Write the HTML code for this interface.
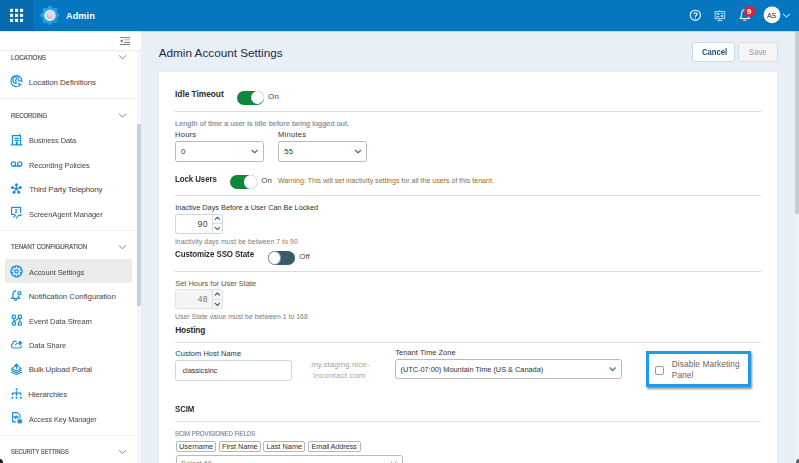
<!DOCTYPE html>
<html><head><meta charset="utf-8">
<style>
*{box-sizing:border-box;margin:0;padding:0}
html,body{width:799px;height:463px;overflow:hidden;background:#e9eff6;font-family:"Liberation Sans",sans-serif}
.a{position:absolute}
.t{position:absolute;line-height:1;white-space:pre;font-family:"Liberation Sans",sans-serif}
.ln{position:absolute;height:1px;background:#dcdcdc}
svg{position:absolute;overflow:visible;z-index:2}
.t{z-index:2}
</style></head><body>
<!-- header -->
<div class="a" style="left:0;top:0;width:799px;height:31px;background:#0577c0;box-shadow:0 1px 1px rgba(0,0,0,0.1);z-index:1"></div>
<div class="a" style="left:0;top:0;width:33px;height:31px;background:#066aae;z-index:1"></div>
<svg style="left:0;top:0" width="33" height="31">
 <g fill="#fff">
 <rect x="10" y="8.8" width="3.1" height="3.1"/><rect x="15" y="8.8" width="3.1" height="3.1"/><rect x="20" y="8.8" width="3.1" height="3.1"/>
 <rect x="10" y="13.8" width="3.1" height="3.1"/><rect x="15" y="13.8" width="3.1" height="3.1"/><rect x="20" y="13.8" width="3.1" height="3.1"/>
 <rect x="10" y="18.8" width="3.1" height="3.1"/><rect x="15" y="18.8" width="3.1" height="3.1"/><rect x="20" y="18.8" width="3.1" height="3.1"/>
 </g>
</svg>
<!-- logo -->
<svg style="left:39px;top:4px" width="22" height="22" viewBox="0 0 22 22">
 <defs><linearGradient id="lg" x1="0" y1="0" x2="1" y2="1"><stop offset="0.45" stop-color="#23a6ec"/><stop offset="1" stop-color="#1690d6"/></linearGradient>
 <radialGradient id="rg" cx="0.6" cy="0.35" r="0.7"><stop offset="0" stop-color="#ecd8f0"/><stop offset="0.55" stop-color="#dcd2dc"/><stop offset="1" stop-color="#b8aea8"/></radialGradient></defs>
 <polygon points="11.00,2.00 13.68,4.93 17.65,4.75 17.47,8.72 20.40,11.40 17.47,14.08 17.65,18.05 13.68,17.87 11.00,20.80 8.32,17.87 4.35,18.05 4.53,14.08 1.60,11.40 4.53,8.72 4.35,4.75 8.32,4.93" fill="url(#lg)" stroke="url(#lg)" stroke-width="1.2" stroke-linejoin="round"/>
 <circle cx="11" cy="11.4" r="5.6" fill="#f6f3ee"/>
 <circle cx="11.3" cy="11.1" r="4.2" fill="url(#rg)"/>
</svg>
<!-- header right icons -->
<svg style="left:686px;top:4px" width="44" height="22" viewBox="0 0 44 22">
 <circle cx="9.4" cy="11.3" r="5.1" fill="none" stroke="#fff" stroke-width="1.1"/>
 <path d="M8 10.3 A1.5 1.5 0 1 1 10.2 11.6 Q9.4 12 9.4 12.7" fill="none" stroke="#fff" stroke-width="1.15"/>
 <circle cx="9.4" cy="14.1" r="0.65" fill="#fff"/>
 <g fill="none" stroke="#b8d8ef" stroke-width="1">
  <rect x="29" y="7.6" width="9.7" height="7.1"/>
  <path d="M33.8 6 V7.6 M33.8 14.7 V16.7 M31.2 16.7 H36.4"/>
 </g>
 <g fill="#b8d8ef"><rect x="30.4" y="9" width="3" height="1.8"/><rect x="34.8" y="9" width="2.6" height="1"/><rect x="34.8" y="11" width="2.6" height="2.2"/><rect x="30.4" y="12" width="3" height="1.4"/></g>
</svg>
<svg style="left:734px;top:2px" width="60" height="26" viewBox="0 0 60 26">
 <path d="M6 16.5 Q7.5 15.5 7.5 12.5 Q7.5 8.3 10.8 7.5 Q14 8.3 14 12.5 Q14 15.5 15.5 16.5 Z" fill="none" stroke="#fff" stroke-width="1.1" stroke-linejoin="round"/>
 <path d="M9.2 18.2 H12.4" stroke="#d8eaf7" stroke-width="1.1"/>
 <circle cx="15.6" cy="9.4" r="5.6" fill="#d0253b"/>
 <circle cx="38" cy="12.8" r="8.4" fill="#fff"/>
 <path d="M49 11.9 L52.5 15 L56 11.9" fill="none" stroke="#fff" stroke-width="1"/>
</svg>
<div class="t" style="left:746.9px;top:7.7px;font-size:7.7px;font-weight:bold;color:#fff">9</div>

<!-- sidebar -->
<div class="a" style="left:0;top:31px;width:141px;height:432px;background:#fff"></div>
<div class="a" style="left:0;top:50px;width:141px;height:1px;background:#ececec"></div>
<div class="a" style="left:137px;top:51px;width:4px;height:412px;background:#f3f5f7"></div>
<div class="a" style="left:137px;top:124px;width:4px;height:182px;background:#c9cfd6"></div>
<svg style="left:114px;top:32px" width="20" height="18" viewBox="0 0 20 18">
 <g stroke="#5e6e7e" stroke-width="0.9"><path d="M5.8 5.6 H16"/><path d="M10.2 7.8 H16" stroke="#9aa6b2"/><path d="M10.2 10.4 H16"/><path d="M5.8 12.5 H16"/></g>
 <path d="M8.3 7.9 L6.6 9 L8.3 10.1 Z" fill="#5e6e7e" stroke="#5e6e7e" stroke-width="0.8"/>
</svg>
<div class="ln" style="left:0;top:97.5px;width:137px;background:#efefef"></div>
<div class="ln" style="left:0;top:230px;width:137px;background:#efefef"></div>
<div class="ln" style="left:0;top:435px;width:137px;background:#efefef"></div>
<svg style="left:0;top:0" width="141" height="463">
 <g fill="none" stroke="#6c7e8e" stroke-width="0.95">
  <path d="M119 55.4 L122.5 58.8 L126 55.4"/>
  <path d="M119 113.7 L122.5 117.2 L126 113.7"/>
  <path d="M119 245.3 L122.5 248.8 L126 245.3"/>
  <path d="M119 450.2 L122.5 453.7 L126 450.2"/>
 </g>
</svg>
<div class="a" style="left:4.8px;top:259.3px;width:127.5px;height:24px;background:#ebebeb;border-radius:2px"></div>
<!-- sidebar icons -->
<svg style="left:8px;top:0" width="18" height="463" viewBox="0 0 18 463">
 <g fill="none" stroke="#1a91d9" stroke-width="1.2" stroke-linecap="round" stroke-linejoin="round">
  <!-- globe y0=72 -->
  <g transform="translate(0 72)">
   <path d="M9.4 14.5 A5.5 5.5 0 1 1 13.9 9.8"/>
   <path d="M7 4.3 Q4.7 5.8 5 8.8 Q5.4 11.2 8 11.2 Q8.6 9.8 7.6 8.8 Q8.6 6.8 8 4.3"/>
   <path d="M10.1 4.9 Q9.7 7 10.4 8.3 Q12 9.6 13.5 8.5"/>
   <path d="M10.2 11.2 L13.8 12.6 L11.9 13.1 L11.2 14.6 Z" fill="#1a91d9" stroke-width="0.5"/>
  </g>
  <!-- building y0=131 -->
  <g transform="translate(0 131)">
   <path d="M4.4 13.4 V4.6 H12.5 V13.4"/>
   <path d="M3.3 13.8 H14"/>
   <path d="M7 7.3 H10.6 M7 9.4 H10.6"/>
   <path d="M8.8 11.2 V13.4" stroke-width="1.8"/>
   <path d="M11.2 4.2 L11.6 3" stroke-width="0.9"/>
  </g>
  <!-- voicemail y0=155 -->
  <g transform="translate(0 155)" stroke-width="1.3">
   <circle cx="5.4" cy="9" r="2.1"/><circle cx="11.7" cy="9" r="2.1"/><path d="M5.4 11.1 H11.7"/>
  </g>
  <!-- telephony y0=179 -->
  <g transform="translate(0 179)" stroke-width="1.1">
   <path d="M8.4 9.6 L8.4 5.8 M8.4 9.6 L4.4 8.6 M8.4 9.6 L12.3 8.6 M8.4 9.6 L6 13.2 M8.4 9.6 L10.8 13.2"/>
  </g>
  <!-- screenagent y0=204 -->
  <g transform="translate(0 204)" stroke-width="1.2">
   <path d="M6.5 10.4 H3.6 V3.4 H12.6 V8.4"/>
   <path d="M5.8 13.2 L7.6 11.2 M8.4 13.8 L11 11.2 L12.6 11.6 L13.4 10.4"/>
  </g>
  <!-- gear y0=262 -->
  <g transform="translate(0 262)" stroke-width="1.25">
   <path d="M7.06 5.35 L7.22 3.75 L9.78 3.75 L9.94 5.35 L10.27 5.49 L11.52 4.47 L13.33 6.28 L12.31 7.53 L12.45 7.86 L14.05 8.02 L14.05 10.58 L12.45 10.74 L12.31 11.07 L13.33 12.32 L11.52 14.13 L10.27 13.11 L9.94 13.25 L9.78 14.85 L7.22 14.85 L7.06 13.25 L6.73 13.11 L5.48 14.13 L3.67 12.32 L4.69 11.07 L4.55 10.74 L2.95 10.58 L2.95 8.02 L4.55 7.86 L4.69 7.53 L3.67 6.28 L5.48 4.47 L6.73 5.49 Z"/>
   <circle cx="8.5" cy="9.3" r="1.7"/>
  </g>
  <!-- bell y0=287 -->
  <g transform="translate(0 287)" stroke-width="1.25">
   <path d="M7.9 3.6 C5.4 4 4.9 6 4.9 8 V10.1 L3.4 11.4 H11.9 L10.4 10.1 V8.9"/>
   <path d="M6.5 12.6 Q7.6 14.3 8.7 12.6"/>
   <circle cx="11.4" cy="6.1" r="1.6"/>
  </g>
  <!-- event stream y0=311 -->
  <g transform="translate(0 311)" stroke-width="1.2">
   <rect x="4.3" y="4.2" width="3.1" height="3.1" rx="0.9"/><rect x="10.3" y="4.2" width="3.1" height="3.1" rx="0.9"/>
   <rect x="4.3" y="11" width="3.1" height="3.1" rx="0.9"/><rect x="10.3" y="11" width="3.1" height="3.1" rx="0.9"/>
   <path d="M5.8 7.3 V11 M11.8 7.3 V11 M6.6 10.4 L10.6 7.2"/>
  </g>
  <!-- cloud y0=336 -->
  <g transform="translate(0 336)" stroke-width="1.2">
   <path d="M8.2 5.3 Q5.3 4.6 4.6 7.8 Q3 8.6 3.5 10.4 Q4.2 12 6 12 H11.5 Q13.3 11.8 13.3 9.8"/>
   <path d="M7.6 8.5 Q8.5 7 12 7"/>
   <path d="M11.5 5.3 L13.6 7 L11.5 8.7 Z" fill="#1a91d9"/>
  </g>
  <!-- bulk upload y0=360 -->
  <g transform="translate(0 360)" stroke-width="1.1">
   <path d="M8.4 4 V8.6"/>
   <path d="M6.4 6.2 L8.4 4 L10.4 6.2 Z" fill="#1a91d9"/>
   <path d="M5.5 7.5 L3.5 8.5 L8.4 11 L13.3 8.5 L11.3 7.5"/>
   <path d="M3.5 10.3 L8.4 12.7 L13.3 10.3"/>
   <path d="M3.5 12.2 L8.4 14.5 L13.3 12.2"/>
  </g>
  <!-- hierarchy y0=385 -->
  <g transform="translate(0 385)" stroke-width="1.2">
   <path d="M8.5 6.2 V10.4 M4.4 10 V8.2 H12.8 V10"/>
  </g>
  <!-- access key y0=409 -->
  <g transform="translate(0 409)" stroke-width="1.1">
   <path d="M7.6 12.9 H4.6 V3.6 H9.4 L12 6.2 V8.2"/>
   <path d="M5.8 8.3 L6.8 7 L7.6 9.6 L8.6 6.9 L9.5 9 L10.5 8"/>
   <rect x="10.2" y="11" width="3.3" height="3" fill="#1a91d9" stroke-width="0.8"/>
   <path d="M10.9 11 V10.2 A1 1 0 0 1 12.8 10.2 V11" stroke-width="0.8"/>
  </g>
 </g>
 <g fill="#1a91d9">
  <circle cx="8.4" cy="184.8" r="1.5"/><circle cx="4.4" cy="187.6" r="1.5"/><circle cx="12.3" cy="187.6" r="1.5"/><circle cx="6" cy="192.2" r="1.5"/><circle cx="10.8" cy="192.2" r="1.5"/>
  <circle cx="8.1" cy="210" r="1"/><path d="M6.7 212.9 Q6.9 211.2 8.1 211.2 Q9.3 211.2 9.5 212.9 Z"/>
  <rect x="7.7" y="388.3" width="1.7" height="1.7"/>
  <rect x="3.5" y="396.9" width="1.8" height="1.8"/><rect x="7.6" y="396.9" width="1.8" height="1.8"/><rect x="11.9" y="396.9" width="1.8" height="1.8"/>
 </g>
</svg>

<!-- main -->
<div class="a" style="left:692px;top:42px;width:43px;height:20px;background:#fff;border:1px solid #c8dbe8;border-radius:2.5px"></div>
<div class="a" style="left:738px;top:42px;width:40px;height:20px;background:#f5f5f5;border:1px solid #d9dcdf;border-radius:2.5px"></div>
<div class="a" style="left:158px;top:71px;width:620px;height:400px;background:#fff;border:1px solid #e3e9f0"></div>
<div class="a" style="left:794.5px;top:31px;width:4.5px;height:432px;background:#eef2f6"></div>
<div class="a" style="left:794.5px;top:31px;width:4.5px;height:183px;background:#c6cdd4"></div>

<!-- lines -->
<div class="ln" style="left:175px;top:110.8px;width:586px"></div>
<div class="ln" style="left:175px;top:194.8px;width:586px"></div>
<div class="ln" style="left:175px;top:271px;width:586px"></div>
<div class="ln" style="left:175px;top:341.5px;width:586px"></div>
<div class="ln" style="left:175px;top:420.8px;width:586px"></div>

<!-- toggles -->
<div class="a" style="left:237.3px;top:90.7px;width:27.2px;height:14px;border-radius:7px;background:#0d873e"></div>
<div class="a" style="left:251px;top:91px;width:13.4px;height:13.4px;border-radius:50%;background:#fff;box-shadow:0 0 0.6px rgba(0,0,0,0.35)"></div>
<div class="a" style="left:230.1px;top:175.2px;width:27px;height:13.6px;border-radius:7px;background:#0d873e"></div>
<div class="a" style="left:243.6px;top:175.4px;width:13.2px;height:13.2px;border-radius:50%;background:#fff;box-shadow:0 0 0.6px rgba(0,0,0,0.35)"></div>
<div class="a" style="left:267.6px;top:251.3px;width:27.2px;height:13.5px;border-radius:7px;background:#3c5b69"></div>
<div class="a" style="left:267.6px;top:251.3px;width:13.5px;height:13.5px;border-radius:50%;background:#fff;border:1px solid #8a9aa3"></div>

<!-- selects -->
<div class="a" style="left:175px;top:141px;width:89px;height:21px;border:1px solid #b9b9b9;border-radius:2.5px;background:#fff"></div>
<div class="a" style="left:278px;top:141px;width:89px;height:21px;border:1px solid #b9b9b9;border-radius:2.5px;background:#fff"></div>
<div class="a" style="left:395px;top:359px;width:227px;height:20px;border:1px solid #b9b9b9;border-radius:2.5px;background:#fff"></div>

<!-- number inputs -->
<div class="a" style="left:175px;top:214px;width:48px;height:20px;border:1px solid #c9d7e3;border-radius:2.5px;background:#fff"></div>
<div class="a" style="left:211.5px;top:214.3px;width:1px;height:19px;background:#d6dfe7"></div>
<div class="a" style="left:211.5px;top:223px;width:11px;height:1px;background:#d6dfe7"></div>
<div class="a" style="left:175px;top:289px;width:48px;height:20px;border:1px solid #dde3e8;border-radius:2.5px;background:#f4f4f4"></div>
<div class="a" style="left:211.6px;top:290.4px;width:10.1px;height:17.3px;background:#f7f7f7"></div>
<div class="a" style="left:211.6px;top:290px;width:1px;height:18.3px;background:#dde3e8"></div>
<div class="a" style="left:211.6px;top:298.5px;width:11px;height:1px;background:#dde3e8"></div>

<svg style="left:0;top:0" width="799" height="463">
 <g fill="none" stroke="#587891" stroke-width="1.35">
  <path d="M251.6 149.9 L254.6 152.8 L257.6 149.9"/>
  <path d="M355 149.9 L358 152.8 L361 149.9"/>
  <path d="M609.7 367.6 L612.6 370.5 L615.5 367.6"/>
 </g>
 <g fill="none" stroke="#4a4a4a" stroke-width="1.1">
  <path d="M214.9 219.7 L217.4 217.3 L219.9 219.7"/>
  <path d="M214.9 227.2 L217.4 229.6 L219.9 227.2"/>
  <path d="M214.9 295.4 L217.4 293 L219.9 295.4"/>
  <path d="M214.9 303.1 L217.4 305.5 L219.9 303.1"/>
 </g>
</svg>
<!-- host input -->
<div class="a" style="left:175px;top:360px;width:117px;height:21px;border:1px solid #c9d7e3;border-radius:2.5px;background:#fff"></div>

<!-- marketing panel -->
<div class="a" style="left:646px;top:351px;width:105px;height:36px;border:3px solid #1b9be8;box-shadow:1px 2px 2px rgba(60,50,40,0.55)"></div>
<div class="a" style="left:655px;top:365.6px;width:9.4px;height:9px;border:1px solid #9a9a9a;border-radius:2px;background:#fff"></div>

<!-- chips -->
<div class="a" style="left:175.5px;top:440.7px;width:40.8px;height:11px;border:1px solid #b5b5b5;border-radius:2px"></div>
<div class="a" style="left:218.7px;top:440.7px;width:42px;height:11px;border:1px solid #b5b5b5;border-radius:2px"></div>
<div class="a" style="left:263.2px;top:440.7px;width:42.3px;height:11px;border:1px solid #b5b5b5;border-radius:2px"></div>
<div class="a" style="left:308px;top:440.7px;width:52.8px;height:11px;border:1px solid #b5b5b5;border-radius:2px"></div>
<div class="a" style="left:175.5px;top:454.6px;width:227px;height:20px;border:1px solid #b9b9b9;border-radius:2.5px"></div>
<div class="t" style="left:181px;top:459.5px;font-size:7.4px;color:#777">Select All</div>
<svg style="left:0;top:0" width="799" height="463"><path d="M390.6 461.5 L393.6 464.3 L396.6 461.5" fill="none" stroke="#999" stroke-width="1"/></svg>

<div class="t" style="left:66.07px;top:12px;font-size:9.20px;font-weight:bold;letter-spacing:0.031px;color:#ffffff">Admin</div>
<div class="t" style="left:766.90px;top:13px;font-size:7.10px;font-weight:normal;letter-spacing:-0.009px;color:#2b2b2b">AS</div>
<div class="t" style="left:158.75px;top:47px;font-size:11.74px;font-weight:normal;letter-spacing:-0.002px;color:#1b2b47">Admin Account Settings</div>
<div class="t" style="left:701.59px;top:48px;font-size:8.40px;font-weight:bold;letter-spacing:-0.100px;color:#1f4e80;transform:scaleX(0.9296);transform-origin:0 0">Cancel</div>
<div class="t" style="left:748.98px;top:48px;font-size:8.40px;font-weight:normal;letter-spacing:-0.100px;color:#8d99a6;transform:scaleX(0.9392);transform-origin:0 0">Save</div>
<div class="t" style="left:10.50px;top:55px;font-size:6.80px;font-weight:normal;letter-spacing:-0.100px;color:#5c5c5c;-webkit-text-stroke:0.22px #5c5c5c;transform:scaleX(0.9222);transform-origin:0 0">LOCATIONS</div>
<div class="t" style="left:10.52px;top:113px;font-size:6.80px;font-weight:normal;letter-spacing:-0.100px;color:#5c5c5c;-webkit-text-stroke:0.22px #5c5c5c;transform:scaleX(0.8855);transform-origin:0 0">RECORDING</div>
<div class="t" style="left:10.88px;top:244px;font-size:6.80px;font-weight:normal;letter-spacing:-0.100px;color:#5c5c5c;-webkit-text-stroke:0.22px #5c5c5c;transform:scaleX(0.9109);transform-origin:0 0">TENANT CONFIGURATION</div>
<div class="t" style="left:10.77px;top:449px;font-size:6.80px;font-weight:normal;letter-spacing:-0.100px;color:#5c5c5c;-webkit-text-stroke:0.22px #5c5c5c;transform:scaleX(0.8422);transform-origin:0 0">SECURITY SETTINGS</div>
<div class="t" style="left:28.67px;top:79px;font-size:7.90px;font-weight:normal;letter-spacing:-0.078px;color:#454545">Location Definitions</div>
<div class="t" style="left:28.70px;top:137px;font-size:7.90px;font-weight:normal;letter-spacing:-0.100px;color:#454545;transform:scaleX(0.9504);transform-origin:0 0">Business Data</div>
<div class="t" style="left:28.70px;top:162px;font-size:7.90px;font-weight:normal;letter-spacing:-0.100px;color:#454545;transform:scaleX(0.9546);transform-origin:0 0">Recording Policies</div>
<div class="t" style="left:29.14px;top:186px;font-size:7.90px;font-weight:normal;letter-spacing:-0.164px;color:#454545">Third Party Telephony</div>
<div class="t" style="left:29.00px;top:211px;font-size:7.90px;font-weight:normal;letter-spacing:-0.100px;color:#454545;transform:scaleX(0.9553);transform-origin:0 0">ScreenAgent Manager</div>
<div class="t" style="left:29.30px;top:269px;font-size:7.90px;font-weight:normal;letter-spacing:-0.100px;color:#454545;transform:scaleX(0.9575);transform-origin:0 0">Account Settings</div>
<div class="t" style="left:28.67px;top:293px;font-size:7.90px;font-weight:normal;letter-spacing:-0.040px;color:#454545">Notification Configuration</div>
<div class="t" style="left:28.69px;top:318px;font-size:7.90px;font-weight:normal;letter-spacing:-0.100px;color:#454545;transform:scaleX(0.9639);transform-origin:0 0">Event Data Stream</div>
<div class="t" style="left:28.70px;top:342px;font-size:7.90px;font-weight:normal;letter-spacing:-0.100px;color:#454545;transform:scaleX(0.9542);transform-origin:0 0">Data Share</div>
<div class="t" style="left:28.67px;top:366px;font-size:7.90px;font-weight:normal;letter-spacing:-0.124px;color:#454545">Bulk Upload Portal</div>
<div class="t" style="left:28.27px;top:391px;font-size:7.90px;font-weight:normal;letter-spacing:-0.108px;color:#454545">Hierarchies</div>
<div class="t" style="left:28.90px;top:416px;font-size:7.90px;font-weight:normal;letter-spacing:-0.100px;color:#454545;transform:scaleX(0.9294);transform-origin:0 0">Access Key Manager</div>
<div class="t" style="left:175.10px;top:90px;font-size:8.40px;font-weight:bold;letter-spacing:-0.053px;color:#2d2d2d">Idle Timeout</div>
<div class="t" style="left:268.08px;top:93px;font-size:7.90px;font-weight:normal;letter-spacing:0.321px;color:#444444">On</div>
<div class="t" style="left:174.92px;top:120px;font-size:7.20px;font-weight:normal;letter-spacing:0.128px;color:#8592a6;-webkit-text-stroke:0.22px #8592a6">Length of time a user is idle before being logged out.</div>
<div class="t" style="left:175.10px;top:131px;font-size:7.50px;font-weight:normal;letter-spacing:0.230px;color:#333333">Hours</div>
<div class="t" style="left:278.10px;top:131px;font-size:7.50px;font-weight:normal;letter-spacing:0.261px;color:#333333">Minutes</div>
<div class="t" style="left:181.02px;top:148px;font-size:7.80px;font-weight:normal;letter-spacing:0.678px;color:#333333">0</div>
<div class="t" style="left:284.29px;top:148px;font-size:7.80px;font-weight:normal;letter-spacing:0.118px;color:#333333">55</div>
<div class="t" style="left:175.32px;top:175px;font-size:8.40px;font-weight:bold;letter-spacing:-0.100px;color:#2d2d2d;transform:scaleX(0.9453);transform-origin:0 0">Lock Users</div>
<div class="t" style="left:261.19px;top:177px;font-size:7.80px;font-weight:normal;letter-spacing:0.145px;color:#444444">On</div>
<div class="t" style="left:278.00px;top:177px;font-size:7.00px;font-weight:normal;letter-spacing:0.019px;color:#8a6d3e">Warning: This will set inactivity settings for all the users of this tenant.</div>
<div class="t" style="left:175.13px;top:204px;font-size:7.40px;font-weight:normal;letter-spacing:-0.038px;color:#333333">Inactive Days Before a User Can Be Locked</div>
<div class="t" style="left:197.56px;top:220px;font-size:8.60px;font-weight:normal;letter-spacing:0.389px;color:#444444">90</div>
<div class="t" style="left:174.89px;top:239px;font-size:6.80px;font-weight:normal;letter-spacing:0.100px;color:#7a7a7a">Inactivity days must be between 7 to 90</div>
<div class="t" style="left:175.28px;top:250px;font-size:8.40px;font-weight:bold;letter-spacing:-0.100px;color:#2d2d2d;transform:scaleX(0.9487);transform-origin:0 0">Customize SSO State</div>
<div class="t" style="left:299.18px;top:253px;font-size:7.90px;font-weight:normal;letter-spacing:0.103px;color:#444444">Off</div>
<div class="t" style="left:175.20px;top:280px;font-size:7.50px;font-weight:normal;letter-spacing:-0.027px;color:#555555">Set Hours for User State</div>
<div class="t" style="left:197.73px;top:295px;font-size:8.40px;font-weight:normal;letter-spacing:0.428px;color:#777777">48</div>
<div class="t" style="left:175.02px;top:314px;font-size:6.80px;font-weight:normal;letter-spacing:0.058px;color:#7a7a7a">User State value must be between 1 to 168</div>
<div class="t" style="left:175.20px;top:326px;font-size:8.40px;font-weight:bold;letter-spacing:-0.158px;color:#2d2d2d">Hosting</div>
<div class="t" style="left:175.32px;top:350px;font-size:7.50px;font-weight:normal;letter-spacing:0.021px;color:#333333">Custom Host Name</div>
<div class="t" style="left:182.40px;top:367px;font-size:7.50px;font-weight:normal;letter-spacing:-0.089px;color:#333333">classicsinc</div>
<div class="t" style="left:308.89px;top:361px;font-size:7.90px;font-weight:normal;letter-spacing:0.089px;color:#a4a4a4">.my.staging.nice-</div>
<div class="t" style="left:313.33px;top:372px;font-size:7.90px;font-weight:normal;letter-spacing:0.269px;color:#a4a4a4">incontact.com</div>
<div class="t" style="left:395.25px;top:349px;font-size:7.50px;font-weight:normal;letter-spacing:0.024px;color:#333333">Tenant Time Zone</div>
<div class="t" style="left:400.56px;top:366px;font-size:7.40px;font-weight:normal;letter-spacing:-0.030px;color:#333333">(UTC-07:00) Mountain Time (US &amp; Canada)</div>
<div class="t" style="left:671.73px;top:360px;font-size:8.40px;font-weight:normal;letter-spacing:0.057px;color:#666666">Disable Marketing</div>
<div class="t" style="left:671.73px;top:371px;font-size:8.40px;font-weight:normal;letter-spacing:0.078px;color:#666666">Panel</div>
<div class="t" style="left:175.34px;top:405px;font-size:8.40px;font-weight:bold;letter-spacing:-0.100px;color:#2d2d2d;transform:scaleX(0.9374);transform-origin:0 0">SCIM</div>
<div class="t" style="left:175.26px;top:431px;font-size:6.60px;font-weight:normal;letter-spacing:-0.100px;color:#8592a6;-webkit-text-stroke:0.22px #8592a6;transform:scaleX(0.9258);transform-origin:0 0">SCIM PROVISIONED FIELDS</div>
<div class="t" style="left:178.98px;top:443px;font-size:7.40px;font-weight:normal;letter-spacing:0.022px;color:#333333">Username</div>
<div class="t" style="left:221.91px;top:443px;font-size:7.40px;font-weight:normal;letter-spacing:-0.036px;color:#333333">First Name</div>
<div class="t" style="left:266.41px;top:443px;font-size:7.40px;font-weight:normal;letter-spacing:0.010px;color:#333333">Last Name</div>
<div class="t" style="left:311.41px;top:443px;font-size:7.40px;font-weight:normal;letter-spacing:-0.158px;color:#333333">Email Address</div>
<div class="a" style="left:-3px;top:459px;width:6px;height:8px;border-radius:50%;background:#0d2a14;filter:blur(0.6px);z-index:3"></div>
<div class="a" style="left:796px;top:459px;width:6px;height:7px;border-radius:50%;background:#5a5f6a;filter:blur(0.7px);z-index:3"></div>
</body></html>
